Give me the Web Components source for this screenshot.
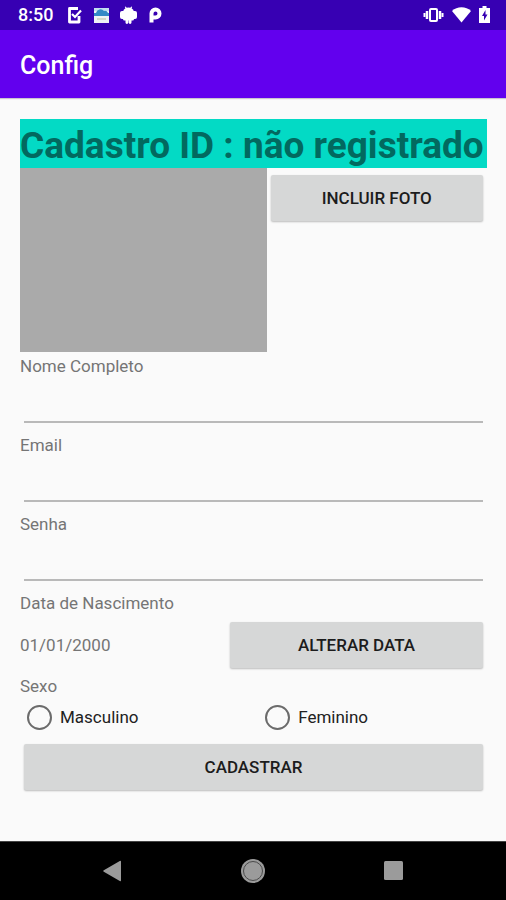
<!DOCTYPE html>
<html lang="pt-BR">
<head>
    <meta charset="UTF-8">
    <meta name="viewport" content="width=device-width, initial-scale=1.0">
    <title>Config</title>
    <style>
        body {
            margin: 0;
            background-color: #fafafa;
            font-family: Roboto, 'Liberation Sans', sans-serif;
            font-size: 17px;
            color: #757575;
        }
    </style>
</head>
<body>
    <config-screen></config-screen>

    <script>
        class StatusBar extends HTMLElement {

            constructor() {
                super();
                this.attachShadow({ mode: 'open' });
            }

            connectedCallback() {
                this.shadowRoot.innerHTML = `
                    <style>
                        :host {
                            display: flex;
                            align-items: center;
                            justify-content: space-between;
                            height: 30px;
                            padding: 0 16px 0 18px;
                            background-color: #3700b3;
                            color: #fff;
                            font-size: 18px;
                            font-weight: 500;
                        }
                        .left, .right {
                            display: flex;
                            align-items: center;
                        }
                        .left {
                            gap: 10px;
                        }
                        .right {
                            gap: 8px;
                        }
                        .time {
                            line-height: 30px;
                            margin-right: 4px;
                        }
                        svg {
                            display: block;
                        }
                    </style>
                    <div class="left">
                        <span class="time">8:50</span>
                        <svg width="16" height="18" viewBox="0 0 16 18" fill="none" stroke="#fff">
                            <path d="M12 10v6H2.500v-13.500H11" stroke-width="2.800" stroke-linejoin="round"/>
                            <path d="M5 8l3 3 6-6.500" stroke-width="2.200"/>
                        </svg>
                        <svg width="17" height="17" viewBox="0 0 17 17">
                            <rect x="1" y="1" width="15" height="15" fill="#eef3f5"/>
                            <rect x="1" y="1" width="15" height="3" fill="#c3dff0"/>
                            <path d="M1 9V6h2a4.500 4.500 0 0 1 8-2 3.500 3.500 0 0 1 4 2h1v3z" fill="#3389c6"/>
                            <path d="M4 12h9" stroke="#d4d8c9" stroke-width="2"/>
                        </svg>
                        <svg width="17" height="18" viewBox="0 0 17 18" fill="#fff">
                            <path d="M3 6a5 5 0 0 1 2.500-3.800L4.800 1l.8-.6L6.700 1.700a6 6 0 0 1 3.600 0L11.400.4l.8.600-.7 1.200A5 5 0 0 1 14 6v7a1.500 1.500 0 0 1-1.500 1.500H11.500V16.500a1.400 1.400 0 0 1-2.800 0v-2H8.300v2a1.400 1.400 0 0 1-2.800 0v-2h-1A1.500 1.500 0 0 1 3 13z"/>
                            <rect x="0" y="5" width="17" height="8" rx="2"/>
                        </svg>
                        <svg width="17" height="18" viewBox="0 0 17 18" fill="none" stroke="#fff">
                            <path d="M4.500 16.500V7.500a4 4 0 1 1 4 4H6.500" stroke-width="4"/>
                        </svg>
                    </div>
                    <div class="right">
                        <svg width="21" height="18" viewBox="0 0 21 18" fill="none" stroke="#fff" stroke-width="2">
                            <rect x="7" y="3" width="7" height="12" rx="1"/>
                            <path d="M4 5v8M17 5v8" stroke-width="2.500"/>
                            <path d="M1.500 7v4M19.500 7v4"/>
                        </svg>
                        <svg width="19" height="16" viewBox="0 0 19 16" fill="#fff">
                            <path d="M0 4a14 14 0 0 1 19 0L9.500 15.500z"/>
                        </svg>
                        <svg width="11" height="18" viewBox="0 0 11 18">
                            <path d="M3.500 0h4v2H11v15H0V2h3.500z" fill="#fff"/>
                            <path d="M6.500 4L3 10h2v4.500L8.500 8.500h-2z" fill="#3700b3"/>
                        </svg>
                    </div>
                `;
            }
        }

        class AppBar extends HTMLElement {

            constructor() {
                super();
                this.attachShadow({ mode: 'open' });
            }

            connectedCallback() {
                this.shadowRoot.innerHTML = `
                    <style>
                        :host {
                            display: block;
                            padding: 4px 20px 0;
                            background-color: #6200ee;
                            box-shadow: 0 1px 1px #c9c4d0;
                            color: #fff;
                        }
                        h1 {
                            margin: 0;
                            font-size: 25px;
                            font-weight: 500;
                            line-height: 64px;
                        }
                    </style>
                    <h1><slot></slot></h1>
                `;
            }
        }

        class FormButton extends HTMLElement {

            constructor() {
                super();
                this.attachShadow({ mode: 'open' });
            }

            connectedCallback() {
                this.shadowRoot.innerHTML = `
                    <style>
                        :host {
                            display: block;
                            padding: 4px;
                        }
                        button {
                            display: block;
                            width: 100%;
                            height: 46px;
                            border: 0;
                            border-radius: 2px;
                            background-color: #d6d7d7;
                            box-shadow: 0 1px 2px rgba(0, 0, 0, 0.25);
                            color: #1c1c1c;
                            font-family: inherit;
                            font-size: 17px;
                            font-weight: 500;
                            text-transform: uppercase;
                        }
                    </style>
                    <button type="button"><slot></slot></button>
                `;
            }
        }

        class TextField extends HTMLElement {

            constructor() {
                super();
                this.attachShadow({ mode: 'open' });
            }

            connectedCallback() {
                const type = this.getAttribute('type') || 'text';

                this.shadowRoot.innerHTML = `
                    <style>
                        :host {
                            display: block;
                        }
                        label {
                            display: block;
                            line-height: 29px;
                        }
                        input {
                            display: block;
                            box-sizing: border-box;
                            width: calc(100% - 8px);
                            height: 42px;
                            margin: 0 4px 8px;
                            padding: 0;
                            border: 0;
                            border-bottom: 2px solid #b9b9b9;
                            outline: 0;
                            background: none;
                            color: #212121;
                            font-family: inherit;
                            font-size: 22px;
                        }
                    </style>
                    <label for="field"><slot></slot></label>
                    <input id="field" type="${type}">
                `;
            }
        }

        class GenderGroup extends HTMLElement {

            constructor() {
                super();
                this.attachShadow({ mode: 'open' });
            }

            connectedCallback() {
                this.shadowRoot.innerHTML = `
                    <style>
                        :host {
                            display: block;
                        }
                        fieldset {
                            min-width: 0;
                            margin: 0;
                            padding: 0;
                            border: 0;
                        }
                        legend {
                            padding: 0;
                            line-height: 29px;
                        }
                        .options {
                            display: grid;
                            grid-template-columns: 51% 49%;
                            margin-bottom: 7px;
                        }
                        label {
                            display: flex;
                            align-items: center;
                            gap: 8px;
                            height: 32px;
                            padding-left: 7px;
                            color: #212121;
                        }
                        input {
                            appearance: none;
                            box-sizing: border-box;
                            width: 25px;
                            height: 25px;
                            margin: 0;
                            border: 2px solid #6b6b6b;
                            border-radius: 50%;
                        }
                        input:checked {
                            border-color: #03dac5;
                            background: radial-gradient(#03dac5 50%, transparent 55%);
                        }
                    </style>
                    <fieldset>
                        <legend>Sexo</legend>
                        <div class="options">
                            <label><input type="radio" name="sexo" value="m">Masculino</label>
                            <label><input type="radio" name="sexo" value="f">Feminino</label>
                        </div>
                    </fieldset>
                `;
            }
        }

        class NavBar extends HTMLElement {

            constructor() {
                super();
                this.attachShadow({ mode: 'open' });
            }

            connectedCallback() {
                this.shadowRoot.innerHTML = `
                    <style>
                        :host {
                            display: flex;
                            height: 58px;
                            padding: 0 42px;
                            border-top: 1px solid #444;
                            background-color: #000;
                        }
                        button {
                            flex: 1;
                            display: flex;
                            align-items: center;
                            justify-content: center;
                            padding: 0;
                            border: 0;
                            background: none;
                        }
                    </style>
                    <button type="button" aria-label="Voltar">
                        <svg width="24" height="24" viewBox="0 0 24 24" fill="#9b9b9b">
                            <path d="M21 2.500v19a.8.8 0 0 1-1.200.6L3.800 12.800a.9.9 0 0 1 0-1.600l16-9.300a.8.8 0 0 1 1.200.6z"/>
                        </svg>
                    </button>
                    <button type="button" aria-label="Início">
                        <svg width="24" height="24" viewBox="0 0 24 24">
                            <circle cx="12" cy="12" r="12" fill="#9b9b9b"/>
                            <circle cx="12" cy="12" r="9.500" fill="none" stroke="#4a4a4a"/>
                        </svg>
                    </button>
                    <button type="button" aria-label="Recentes">
                        <svg width="24" height="24" viewBox="0 0 24 24">
                            <rect x="2" y="2" width="19" height="19" rx="1.500" fill="#9b9b9b"/>
                        </svg>
                    </button>
                `;
            }
        }

        class ConfigScreen extends HTMLElement {

            constructor() {
                super();
                this.attachShadow({ mode: 'open' });
            }

            connectedCallback() {
                this.shadowRoot.innerHTML = `
                    <style>
                        :host {
                            display: flex;
                            flex-direction: column;
                            min-height: 100vh;
                        }
                        main {
                            flex: 1;
                            padding: 21px 19px 21px 20px;
                        }
                        h2 {
                            margin: 0;
                            padding-top: 4px;
                            background-color: #03dac5;
                            color: #02695f;
                            font-size: 37px;
                            font-weight: 700;
                            line-height: 45px;
                            white-space: nowrap;
                        }
                        .row {
                            display: grid;
                        }
                        .photo-row {
                            grid-template-columns: 246fr 220fr;
                        }
                        .photo-row form-button {
                            margin-top: 3px;
                        }
                        .photo {
                            height: 184px;
                            background-color: #aaa;
                        }
                        .label {
                            line-height: 29px;
                        }
                        .date-row {
                            grid-template-columns: 206fr 261fr;
                            align-items: center;
                        }
                    </style>
                    <status-bar></status-bar>
                    <app-bar>Config</app-bar>
                    <main>
                        <h2>Cadastro ID : não registrado</h2>
                        <div class="row photo-row">
                            <div class="photo"></div>
                            <form-button>Incluir foto</form-button>
                        </div>
                        <text-field>Nome Completo</text-field>
                        <text-field type="email">Email</text-field>
                        <text-field type="password">Senha</text-field>
                        <div class="label">Data de Nascimento</div>
                        <div class="row date-row">
                            <span>01/01/2000</span>
                            <form-button>Alterar data</form-button>
                        </div>
                        <gender-group></gender-group>
                        <form-button>Cadastrar</form-button>
                    </main>
                    <nav-bar></nav-bar>
                `;
            }
        }

        customElements.define('status-bar', StatusBar);
        customElements.define('app-bar', AppBar);
        customElements.define('form-button', FormButton);
        customElements.define('text-field', TextField);
        customElements.define('gender-group', GenderGroup);
        customElements.define('nav-bar', NavBar);
        customElements.define('config-screen', ConfigScreen);
    </script>
</body>
</html>
